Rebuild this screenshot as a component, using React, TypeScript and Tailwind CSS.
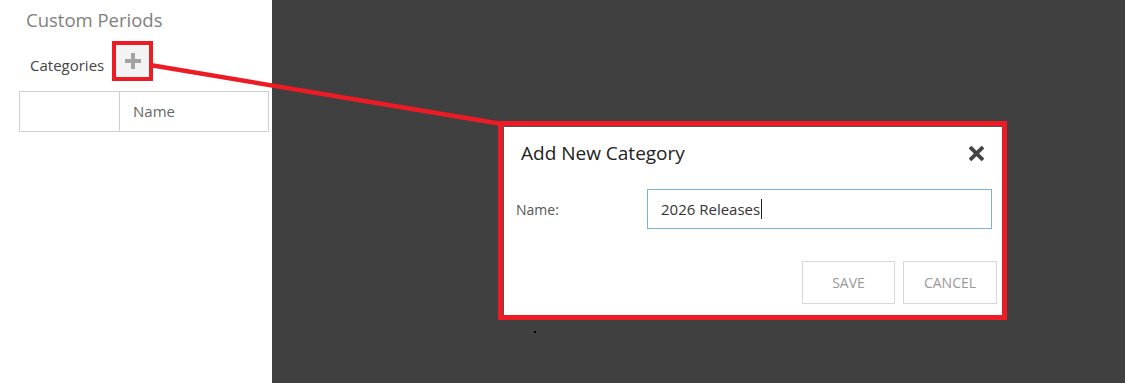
import React from "react";

const font = { fontFamily: '"Open Sans", "Noto Sans", sans-serif' };

function PlusIcon() {
  return (
    <svg width="16" height="16" viewBox="0 0 16 16">
      <rect x="6" y="0" width="4" height="16" fill="#a3a3a3" />
      <rect x="0" y="6" width="16" height="4" fill="#a3a3a3" />
    </svg>
  );
}

function CloseIcon() {
  return (
    <svg width="15" height="15" viewBox="0 0 16 16">
      <path d="M2.5 2.5 L13.5 13.5 M13.5 2.5 L2.5 13.5" stroke="#444" strokeWidth="4" strokeLinecap="square" />
    </svg>
  );
}

export default function App() {
  return (
    <div className="relative flex w-[1125px] h-[383px] overflow-hidden bg-[#404040]" style={font}>
      {/* Left panel */}
      <div className="w-[272px] h-full bg-white flex flex-col">
        <div className="pl-[26px] pt-[8px] text-[18.5px] leading-[24px] text-[#808080]">Custom Periods</div>
        <div className="flex items-center pl-[30px] mt-[9px] h-[40px]">
          <span className="text-[15px] text-[#444] mt-[8px]">Categories</span>
          <div className="ml-[8px] w-[41px] h-[40px] border-[4px] border-[#ed1c24] bg-[#f3f3f3] flex items-center justify-center">
            <PlusIcon />
          </div>
        </div>
        <div className="ml-[19px] mt-[10px] w-[250px] h-[41px] border border-[#cfcfcf] flex">
          <div className="w-[100px] border-r border-[#cfcfcf]" />
          <div className="flex-1 flex items-center pl-[13px] text-[15px] text-[#666]">Name</div>
        </div>
      </div>

      {/* Connector line */}
      <svg className="absolute left-0 top-0 pointer-events-none" width="1125" height="383">
        <line x1="150" y1="65" x2="502" y2="124" stroke="#ed1c24" strokeWidth="4.5" />
      </svg>

      {/* Dialog */}
      <div className="absolute left-[498px] top-[121px] w-[509px] h-[199px] border-[5px] border-[#ed1c24] bg-white flex flex-col shadow-[1px_1px_0_#555_inset]">
        <div className="flex items-center justify-between pl-[18px] pr-[18px] pt-[7px] h-[47px]">
          <span className="text-[19px] text-[#222]">Add New Category</span>
          <CloseIcon />
        </div>
        <div className="flex items-center pl-[13px] pr-[10px] mt-[16px]">
          <span className="w-[131px] text-[14px] text-[#555]">Name:</span>
          <div className="flex-1 h-[40px] border border-[#7fb0dc] flex items-center pl-[13px] text-[15px] text-[#333]">
            2026 Releases
            <span className="inline-block w-px h-[20px] bg-[#222] ml-[1px]" />
          </div>
        </div>
        <div className="flex justify-end gap-[8px] pr-[5px] mt-[32px]">
          <button className="w-[93px] h-[43px] border border-[#d8d8d8] text-[14px] text-[#999] bg-white">SAVE</button>
          <button className="w-[94px] h-[43px] border border-[#d8d8d8] text-[14px] text-[#999] bg-white">CANCEL</button>
        </div>
      </div>

      <div className="absolute left-[534px] top-[331px] w-[2px] h-[2px] bg-black" />
    </div>
  );
}
